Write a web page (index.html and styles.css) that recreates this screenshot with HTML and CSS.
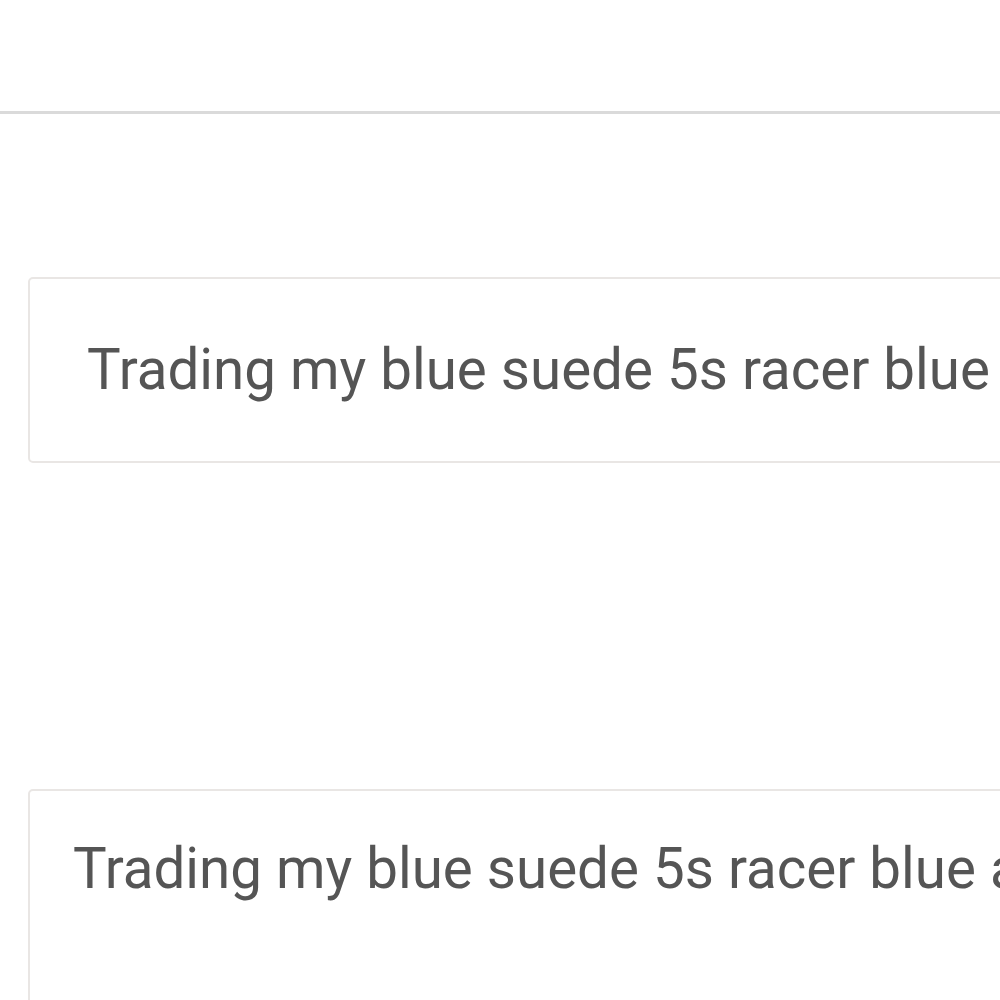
FILE: index.html
```html
<!DOCTYPE html>
<html>
<head>
<meta charset="utf-8">
<link rel="stylesheet" href="styles.css">
</head>
<body>
<div class="page">
  <header class="topbar"></header>
  <main class="content">
    <div class="field single">Trading my blue suede 5s racer blue and white</div>
    <div class="field multi">Trading my blue suede 5s racer blue and white</div>
  </main>
</div>
</body>
</html>
```

FILE: styles.css
```css
html, body {
  margin: 0;
  padding: 0;
  background: #fff;
  overflow: hidden;
}
.page {
  width: 1000px;
  height: 1000px;
  overflow: hidden;
  font-family: Roboto, "Liberation Sans", sans-serif;
}
.topbar {
  height: 111px;
  border-bottom: 3px solid #dadada;
}
.content {
  padding: 163px 0 0 28px;
  display: flex;
  flex-direction: column;
  gap: 326px;
}
.field {
  width: 1200px;
  box-sizing: border-box;
  border: 2px solid #e9e6e4;
  border-radius: 5px;
  color: #555;
  font-size: 56.5px;
  white-space: nowrap;
  overflow: hidden;
}
.single {
  height: 186px;
  display: flex;
  align-items: center;
  padding-left: 57px;
}
.multi {
  height: 260px;
  padding: 38px 0 0 43px;
  line-height: 80px;
}
```
